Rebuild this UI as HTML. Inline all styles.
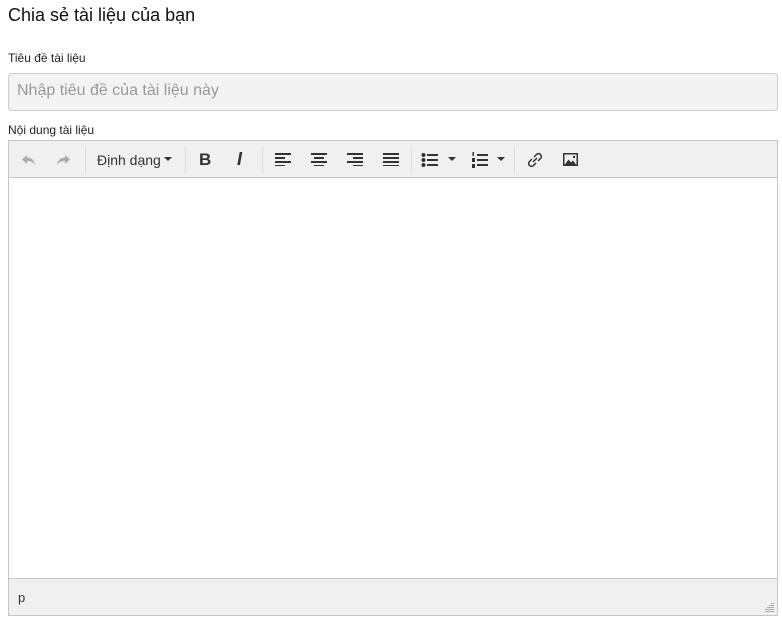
<!DOCTYPE html>
<html><head><meta charset="utf-8"><style>
*{box-sizing:border-box;margin:0;padding:0}
body{width:782px;height:621px;background:#fff;font-family:"Liberation Sans",Arial,sans-serif;color:#333;position:relative;overflow:hidden}
h3{position:absolute;left:8px;top:5px;font-size:18px;font-weight:normal;color:#111}
.lbl{position:absolute;left:8px;font-size:12px;color:#222}
.inp{position:absolute;left:8px;top:73px;width:770px;height:38px;background:#f3f3f3;border:1px solid #ccc;border-radius:4px;font-size:16px;color:#999;padding:8px 8px}
.ed{position:absolute;left:8px;top:140px;width:770px;height:476px;border:1px solid #c5c5c5}
.tb{height:37px;background:#f0f0f0;border-bottom:1px solid #c5c5c5;position:relative}
.sb{position:absolute;left:0;right:0;bottom:0;height:37px;background:#f0f0f0;border-top:1px solid #c5c5c5;font-size:13px;padding:11px 9px}
.sep{position:absolute;top:5px;width:1px;height:28px;background:#ddd}
.ic{position:absolute;top:11px}
.t{position:absolute;top:11px;font-size:14px;color:#333}
</style></head><body>
<h3>Chia sẻ tài liệu của bạn</h3>
<div class="lbl" style="top:51px">Tiêu đề tài liệu</div>
<div class="inp">Nhập tiêu đề của tài liệu này</div>
<div class="lbl" style="top:123px">Nội dung tài liệu</div>
<div class="ed">
<div class="tb">
<svg class="ic" style="left:12px" width="16" height="16" viewBox="0 0 16 16"><path d="M6 3L1 7.5 6 12V9c4 0 6 1 8 4-1-5-3-7-8-7.5z" fill="#aaa"/></svg>
<svg class="ic" style="left:46px" width="16" height="16" viewBox="0 0 16 16"><path d="M10 3l5 4.5L10 12V9c-4 0-6 1-8 4 1-5 3-7 8-7.5z" fill="#aaa"/></svg>
<div class="sep" style="left:76px"></div>
<div class="t" style="left:88px">Định dạng</div>
<svg class="ic" style="left:155px;top:16px" width="8" height="5"><path d="M0 0h8L4 4z" fill="#333"/></svg>
<div class="sep" style="left:176px"></div>
<div class="t" style="left:190px;font-weight:bold;font-size:17px;top:9px">B</div>
<div class="t" style="left:228px;font-style:italic;font-weight:bold;font-size:18px;top:8px">I</div>
<div class="sep" style="left:253px"></div>
<svg class="ic" style="left:266px" width="16" height="14"><g fill="#333"><rect y="1" width="16" height="2"/><rect y="5" width="10" height="2"/><rect y="9" width="16" height="2"/><rect y="13" width="10" height="1.5"/></g></svg>
<svg class="ic" style="left:302px" width="16" height="14"><g fill="#333"><rect y="1" width="16" height="2"/><rect x="3" y="5" width="10" height="2"/><rect y="9" width="16" height="2"/><rect x="3" y="13" width="10" height="1.5"/></g></svg>
<svg class="ic" style="left:338px" width="16" height="14"><g fill="#333"><rect y="1" width="16" height="2"/><rect x="6" y="5" width="10" height="2"/><rect y="9" width="16" height="2"/><rect x="6" y="13" width="10" height="1.5"/></g></svg>
<svg class="ic" style="left:374px" width="16" height="14"><g fill="#333"><rect y="1" width="16" height="2"/><rect y="5" width="16" height="2"/><rect y="9" width="16" height="2"/><rect y="13" width="16" height="1.5"/></g></svg>
<div class="sep" style="left:402px"></div>
<svg class="ic" style="left:412px" width="18" height="16"><g fill="#333"><circle cx="2.5" cy="3" r="2"/><circle cx="2.5" cy="8" r="2"/><circle cx="2.5" cy="13" r="2"/><rect x="6" y="2" width="11" height="2"/><rect x="6" y="7" width="11" height="2"/><rect x="6" y="12" width="11" height="2"/></g></svg>
<svg class="ic" style="left:439px;top:16px" width="8" height="5"><path d="M0 0h8L4 4z" fill="#333"/></svg>
<svg class="ic" style="left:462px" width="18" height="16"><g fill="#333"><rect x="1.5" y="0" width="1.5" height="4"/><rect x="1" y="6" width="3" height="4"/><rect x="1" y="12" width="3" height="4"/><rect x="6" y="2" width="11" height="2"/><rect x="6" y="7" width="11" height="2"/><rect x="6" y="12" width="11" height="2"/></g></svg>
<svg class="ic" style="left:488px;top:16px" width="8" height="5"><path d="M0 0h8L4 4z" fill="#333"/></svg>
<div class="sep" style="left:505px"></div>
<svg class="ic" style="left:517px;top:10px" width="18" height="18" viewBox="0 0 18 18"><g fill="none" stroke="#333" stroke-width="1.5"><path d="M7 11l4-4"/><path d="M8 6l2.5-2.5a2.8 2.8 0 014 4L12 10"/><path d="M10 12l-2.5 2.5a2.8 2.8 0 01-4-4L6 8"/></g></svg>
<svg class="ic" style="left:554px;top:12px" width="15" height="13"><rect x="0.75" y="0.75" width="13.5" height="11.5" fill="none" stroke="#333" stroke-width="1.5"/><path d="M2 11.5l3.5-5 2.5 3 2-2 3 4z" fill="#333"/><circle cx="11" cy="4" r="1.2" fill="#333"/></svg>
</div>
<div class="sb">p
<svg style="position:absolute;right:3px;bottom:3px" width="9" height="9"><g fill="#aaa"><rect x="6" y="0" width="3" height="1"/><rect x="4" y="2" width="5" height="1"/><rect x="2" y="4" width="7" height="1"/><rect x="0" y="6" width="9" height="1"/><rect x="0" y="8" width="9" height="1"/></g></svg>
</div>
</div>
</body></html>
